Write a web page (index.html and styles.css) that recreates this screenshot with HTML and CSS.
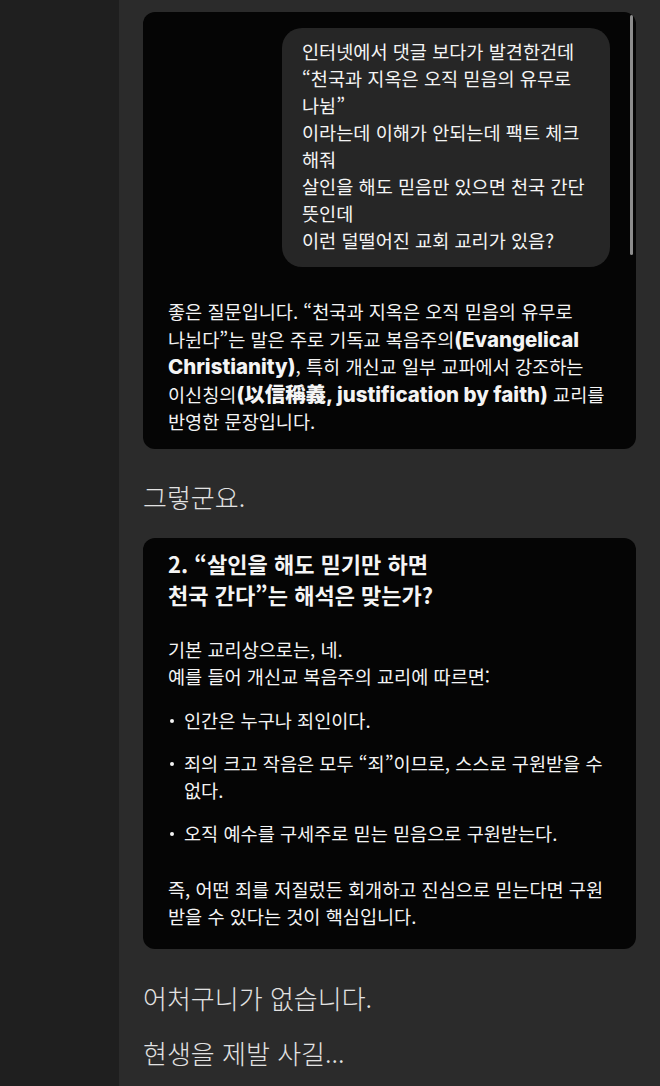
FILE: index.html
```html
<!DOCTYPE html>
<html lang="ko">
<head>
    <meta charset="UTF-8">
    <meta name="viewport" content="width=device-width, initial-scale=1.0">
    <title>대화</title>
    <link rel="stylesheet" href="styles.css">
</head>
<body>

    <div class="sidebar"></div>

    <div class="thread">
        <div class="card">
            <span class="scrollbar"></span>
            <div class="bubble">
                인터넷에서 댓글 보다가 발견한건데<br>
                “천국과 지옥은 오직 믿음의 유무로<br>
                나뉨”<br>
                이라는데 이해가 안되는데 팩트 체크<br>
                해줘<br>
                살인을 해도 믿음만 있으면 천국 간단<br>
                뜻인데<br>
                이런 덜떨어진 교회 교리가 있음?
            </div>
            <p class="answer">좋은 질문입니다. “천국과 지옥은 오직 믿음의 유무로 나뉜다”는 말은 주로 기독교 복음주의<b>(Evangelical Christianity)</b>, 특히 개신교 일부 교파에서 강조하는 이신칭의<b>(以信稱義, justification by faith)</b> 교리를 반영한 문장입니다.</p>
        </div>

        <p class="comment">그렇군요.</p>

        <div class="card card-answer">
            <h3>2. “살인을 해도 믿기만 하면<br>천국 간다”는 해석은 맞는가?</h3>
            <p class="answer">기본 교리상으로는, 네.<br>예를 들어 개신교 복음주의 교리에 따르면:</p>
            <ul>
                <li>인간은 누구나 죄인이다.</li>
                <li>죄의 크고 작음은 모두 “죄”이므로, 스스로 구원받을 수 없다.</li>
                <li>오직 예수를 구세주로 믿는 믿음으로 구원받는다.</li>
            </ul>
            <p class="answer summary">즉, 어떤 죄를 저질렀든 회개하고 진심으로 믿는다면 구원받을 수 있다는 것이 핵심입니다.</p>
        </div>

        <p class="comment comment-first">어처구니가 없습니다.</p>
        <p class="comment comment-next">현생을 제발 사길...</p>
    </div>

</body>
</html>
```

FILE: styles.css
```css
body {
    margin: 0;
    display: flex;
    min-height: 100vh;
    background: #2b2b2b;
    font-family: "Noto Sans CJK KR", "Inter", sans-serif;
    color: #f4f4f4;
}
.sidebar {
    width: 119px;
    flex-shrink: 0;
    background: #1f1f1f;
}
.thread {
    flex: 1;
    padding: 12px 24px 0 24px;
}
.card {
    position: relative;
    background: #050505;
    border-radius: 12px;
    padding: 16px 25px 14px 25px;
}
.scrollbar {
    position: absolute;
    top: 3px;
    right: 3px;
    width: 3px;
    height: 240px;
    border-radius: 2px;
    background: #8c8c8c;
}
.bubble {
    width: 288px;
    margin: 0 1px 30px auto;
    padding: 9px 20px 14px 20px;
    background: #262626;
    border-radius: 20px;
    font-size: 18.6px;
    line-height: 27px;
    white-space: nowrap;
}
.answer {
    margin: 0;
    font-size: 18.6px;
    line-height: 27.5px;
    word-break: keep-all;
}
.answer b {
    font-family: "Inter", "Noto Sans CJK KR", sans-serif;
    font-weight: 800;
    font-size: 1.1em;
    line-height: 1;
}
.comment {
    margin: 33px 0 26px 0;
    font-size: 26px;
    line-height: 30px;
    font-weight: 300;
    color: #e2e2e2;
}
.card-answer {
    padding: 10px 25px 19px 25px;
}
.card-answer h3 {
    margin: 0 0 25px 0;
    font-size: 22px;
    line-height: 31px;
    font-weight: 700;
}
.card-answer ul {
    list-style: none;
    margin: 16px 0 29px 0;
    padding: 0;
}
.card-answer li {
    position: relative;
    padding-left: 16px;
    margin-bottom: 16px;
    font-size: 18.6px;
    line-height: 27px;
    word-break: keep-all;
}
.card-answer li::before {
    content: "";
    position: absolute;
    left: 2px;
    top: 13px;
    width: 4px;
    height: 4px;
    border-radius: 50%;
    background: #f4f4f4;
}
.card-answer li:last-child {
    margin-bottom: 0;
}
.card-answer .summary {
    word-break: normal;
}
.comment-first {
    margin: 34px 0 0 0;
}
.comment-next {
    margin: 25px 0 0 0;
}
```
